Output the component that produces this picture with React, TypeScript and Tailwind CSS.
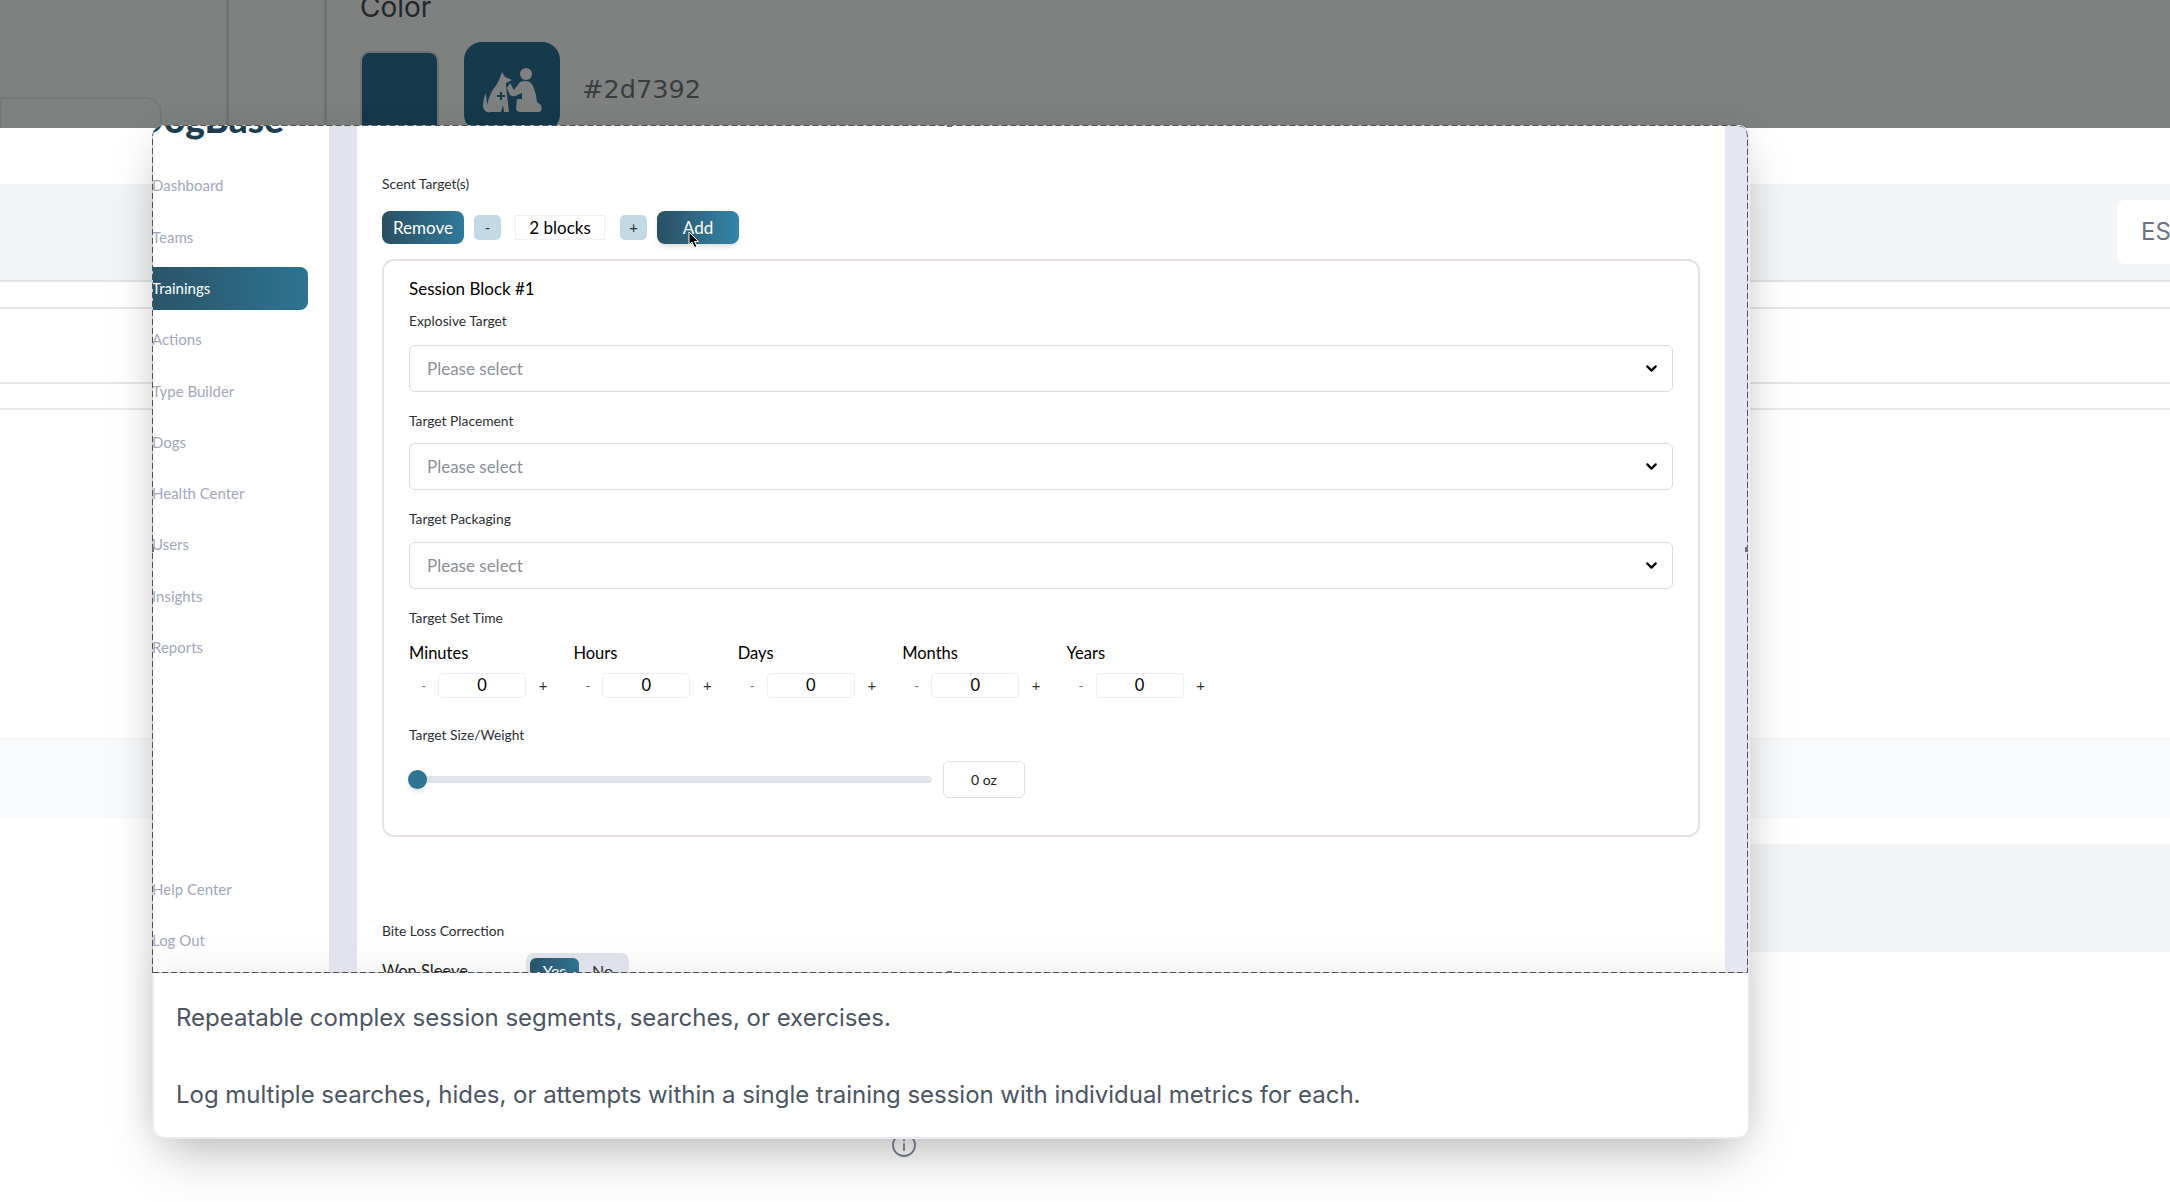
import { ChevronDown } from "lucide-react";

const navItems = ["Dashboard", "Teams", "Trainings", "Actions", "Type Builder", "Dogs", "Health Center", "Users", "Insights", "Reports"];
const timeUnits = ["Minutes", "Hours", "Days", "Months", "Years"];
const selects = [
  { label: "Explosive Target", labelClass: "mt-[12px]", boxClass: "mt-[15px]" },
  { label: "Target Placement", labelClass: "mt-[20px]", boxClass: "mt-[13px]" },
  { label: "Target Packaging", labelClass: "mt-[20px]", boxClass: "mt-[14px]" },
];

function VetIcon() {
  return (
    <svg viewBox="0 0 60 48" className="w-[60px] h-[48px]" fill="#7f8180">
      <circle cx="43" cy="7" r="6" />
      <path d="M27 16 L31 23 L37 15 Q42 13 47 15 Q52 19 54 35 L58 38 Q60 44 56 45 L38 45 Q33 45 33 41 L34 32 L39 32 L39 26 L32 29 Q28 30 26 26 L24 21 Z" />
      <path d="M19 5 L22 10 L29 13 L23 16 L24 28 L26 45 L21 45 L20 38 L18 45 L8 45 Q2 47 0 40 Q0 32 3 26 L4 38 Q6 30 9 24 Q14 18 16 13 Z" />
      <path d="M17 25 h2 v3 h3 v2 h-3 v3 h-2 v-3 h-3 v-2 h3 Z" fill="#163a4b" />
    </svg>
  );
}

function Backdrop() {
  return (
    <div className="flex flex-col">
      <div className="h-[128px] flex bg-[#7f8180] overflow-hidden">
        <div className="w-[229px] shrink-0 border-r-[3px] border-[#727473] pt-[97px]">
          <div className="w-[162px] h-[40px] rounded-tr-2xl border-2 border-[#767877]" />
        </div>
        <div className="w-[98px] shrink-0 border-r-[3px] border-[#727473]" />
        <div className="pl-[33px]">
          <div className="mt-[-11px] h-[36px] text-[28px] leading-[36px] text-[#24272a] font-['Inter',sans-serif]">Color</div>
          <div className="flex mt-[17px] items-start">
            <div className="mt-[9px] w-[79px] h-[90px] rounded-[10px] bg-[#163a4b] border-2 border-[#6f7170]" />
            <div className="ml-[25px] w-[96px] h-[90px] rounded-[18px] bg-[#163a4b] flex justify-center pt-[25px] pl-[2px]">
              <VetIcon />
            </div>
            <div className="ml-[22px] mt-[31px] text-[25.6px] leading-[32px] text-[#3a3d40] font-['DejaVu_Sans',sans-serif]">#2d7392</div>
          </div>
        </div>
      </div>
      <div className="h-[56px]" />
      <div className="h-[96px] bg-[#f3f4f6] flex justify-end items-start pt-[16px]">
        <div className="w-[53px] h-[64px] bg-white rounded-l-lg pl-[24px] flex items-center text-[24px] text-[#6b7280] font-['Inter',sans-serif] overflow-hidden">
          ES
        </div>
      </div>
      <div className="h-[2px] bg-[#e1e4e6]" />
      <div className="h-[25px]" />
      <div className="h-[2px] bg-[#e5e7eb]" />
      <div className="h-[73px]" />
      <div className="h-[2px] bg-[#e5e7eb]" />
      <div className="h-[24px]" />
      <div className="h-[2px] bg-[#e8ebeb]" />
      <div className="h-[328px]" />
      <div className="h-[1px] bg-[#f3f4f6]" />
      <div className="h-[80px] bg-[#f9fafb]" />
      <div className="h-[25px]" />
      <div className="h-[108px] flex justify-end">
        <div className="w-[570px] bg-[#f3f4f6]" />
      </div>
    </div>
  );
}

function Sidebar() {
  return (
    <div className="w-[177px] shrink-0 flex flex-col overflow-hidden font-['Lato',sans-serif]">
      <div className="h-[35px] shrink-0 ml-[-16px] mt-[-23px] mb-[23px] text-[37px] leading-[34px] font-black text-[#1e3d50] whitespace-nowrap">
        DogBase
      </div>
      {navItems.map((item) => (
        <div key={item} className="h-[51.3px] shrink-0 flex items-center">
          {item === "Trainings" ? (
            <div className="w-[156px] h-[43px] flex items-center rounded-r-lg bg-linear-to-r from-[#2a5468] to-[#2d7392] text-[15px] text-white">
              {item}
            </div>
          ) : (
            <span className="text-[15px] text-[#a3a7bd]">{item}</span>
          )}
        </div>
      ))}
      <div className="mt-auto pb-[7px]">
        {["Help Center", "Log Out"].map((item) => (
          <div key={item} className="h-[51.3px] flex items-center text-[15px] text-[#a3a7bd]">
            {item}
          </div>
        ))}
      </div>
    </div>
  );
}

function SelectField({ label, labelClass, boxClass }: { label: string; labelClass: string; boxClass: string }) {
  return (
    <>
      <div className={`h-[18px] text-[13.8px] leading-[18px] text-[#2b2f33] ${labelClass}`}>{label}</div>
      <div className={`h-[47px] flex items-center justify-between rounded-md border border-[#d9dbe0] pl-[17px] pr-[12px] ${boxClass}`}>
        <span className="text-[17px] text-[#8b9097]">Please select</span>
        <ChevronDown size={17} strokeWidth={3} className="text-black" />
      </div>
    </>
  );
}

function SessionBlock() {
  return (
    <div className="mt-[15px] h-[578px] rounded-xl border-2 border-[#e9e0e1] pt-[17px] px-[25px]">
      <div className="h-[22px] text-[17px] leading-[22px] text-black">Session Block #1</div>
      {selects.map((s) => (
        <SelectField key={s.label} {...s} />
      ))}
      <div className="mt-[20px] h-[18px] text-[13.8px] leading-[18px] text-[#2b2f33]">Target Set Time</div>
      <div className="mt-[15px] flex">
        {timeUnits.map((unit) => (
          <div key={unit} className="w-[164.4px]">
            <div className="h-[22px] text-[16.5px] leading-[22px] text-black">{unit}</div>
            <div className="mt-[9px] flex h-[25px] items-center">
              <span className="w-[29px] text-center text-[14px] text-[#777]">-</span>
              <div className="w-[88px] h-[25px] flex items-center justify-center border border-[#eceef2] rounded-sm text-[16.5px] text-black">0</div>
              <span className="w-[34px] text-center text-[15px] text-[#333]">+</span>
            </div>
          </div>
        ))}
      </div>
      <div className="mt-[28px] h-[18px] text-[13.8px] leading-[18px] text-[#2b2f33]">Target Size/Weight</div>
      <div className="mt-[17px] flex h-[37px] items-center">
        <div className="relative w-[523px] h-[7px] rounded-full bg-[#e2e4ec]">
          <div className="absolute left-[-1px] top-[-6px] w-[19px] h-[19px] rounded-full bg-[#2d7392] shadow-md" />
        </div>
        <div className="ml-[11px] w-[82px] h-[37px] flex items-center justify-center rounded-md border border-[#e0e0e2] text-[14px] text-[#222]">0 oz</div>
      </div>
    </div>
  );
}

function MainPanel() {
  return (
    <div className="flex-1 pt-[50px] pl-[25px] pr-[25px] overflow-hidden font-['Lato',sans-serif]">
      <div className="h-[18px] text-[13.8px] leading-[18px] text-[#2b2f33]">Scent Target(s)</div>
      <div className="mt-[18px] h-[33px] flex items-center">
        <div className="w-[82px] h-[33px] flex items-center justify-center rounded-lg bg-linear-to-r from-[#2a4f62] to-[#2f7a9b] text-[17px] text-white">Remove</div>
        <div className="ml-[10px] w-[27px] h-[25px] flex items-center justify-center rounded-[5px] bg-[#c3dae4] text-[15px] text-[#333]">-</div>
        <div className="ml-[14px] w-[90px] h-[25px] flex items-center justify-center border border-[#eff0f5] text-[17px] text-black">2 blocks</div>
        <div className="ml-[15px] w-[27px] h-[25px] flex items-center justify-center rounded-[5px] bg-[#c3dae4] text-[15px] text-[#333]">+</div>
        <div className="ml-[10px] w-[82px] h-[33px] flex items-center justify-center rounded-lg bg-linear-to-r from-[#2a4f62] to-[#3386ab] text-[17px] text-white shadow-md">Add</div>
      </div>
      <SessionBlock />
      <div className="mt-[85px] h-[18px] text-[13.8px] leading-[18px] text-[#2b2f33]">Bite Loss Correction</div>
      <div className="mt-[13px] flex items-start">
        <div className="w-[144px] pt-[7px] text-[16.5px] leading-[22px] text-[#222]">Won Sleeve</div>
        <div className="w-[103px] h-[40px] rounded-lg bg-[#dfe1ea] pt-[5px] pl-[4px] flex">
          <div className="w-[49px] h-[30px] rounded-md flex justify-center pt-[1px] bg-linear-to-r from-[#2a5468] to-[#2d7392] text-[16px] text-white">Yes</div>
          <div className="ml-[13px] pt-[1px] text-[16px] text-[#333]">No</div>
        </div>
      </div>
    </div>
  );
}

function Caption() {
  return (
    <div className="h-[164px] pl-[22px] pr-[24px] pt-[28px] border-l-2 border-[#ebebf1] rounded-bl-xl text-[24px] tracking-[-0.03px] leading-[34px] text-[#4b5563] font-['Inter',sans-serif] shadow-[0_-12px_30px_rgba(0,0,0,0.05)]">
      <p>Repeatable complex session segments, searches, or exercises.</p>
      <p className="mt-[43px]">Log multiple searches, hides, or attempts within a single training session with individual metrics for each.</p>
    </div>
  );
}

// dashed crop frame that sits on the screenshot, with its four small handles
function CropFrame() {
  return (
    <svg viewBox="0 0 1596 848" className="absolute inset-0 w-[1596px] h-[848px] pointer-events-none" fill="none">
      <path d="M0.5 848 V12 Q0.5 0.5 12 0.5 H1584 Q1595.5 0.5 1595.5 12 V847.5 H0.5" stroke="#c9cbd0" strokeWidth="1" />
      <path d="M0.5 848 V12 Q0.5 0.5 12 0.5 H1584 Q1595.5 0.5 1595.5 12 V847.5 H0.5" stroke="#4f5257" strokeWidth="1" strokeDasharray="6 3" />
      <path d="M795 0 h5 v2 h-5 Z M795 846 h5 v2 h-5 Z M1593 422 h3 v5 h-3 Z M0 422 h2 v5 h-2 Z" fill="#6b6e73" />
    </svg>
  );
}

function Cursor() {
  return (
    <svg viewBox="0 0 12 18" className="absolute left-[688px] top-[231px] w-[12px] h-[18px]">
      <path d="M1 1 L1 14 L4 11 L6.5 16.5 L9 15.5 L6.5 10.5 L10.5 10.5 Z" fill="#000" stroke="#fff" strokeWidth="1" />
    </svg>
  );
}

export default function App() {
  return (
    <div className="relative w-[2170px] h-[1202px] bg-white overflow-hidden">
      <Backdrop />
      <svg viewBox="0 0 24 24" className="absolute left-[892px] top-[1133px] w-[24px] h-[24px] text-[#7b8190]" fill="none" stroke="currentColor" strokeWidth="1.8" strokeLinecap="round">
        <circle cx="12" cy="12" r="11" />
        <path d="M12 11 V17 M12 7 V7.5" />
      </svg>
      <div className="absolute left-[152px] top-[125px] w-[1598px] rounded-xl bg-white border-r-2 border-b-2 border-[#ebebf1] shadow-[0_25px_50px_-12px_rgba(0,0,0,0.25),0_0_36px_rgba(0,0,0,0.05)]">
        <div className="relative h-[848px] flex overflow-hidden rounded-t-xl">
          <Sidebar />
          <div className="w-[28px] shrink-0 bg-[#e1e2ec]" />
          <MainPanel />
          <div className="w-[23px] shrink-0 bg-[#e5e6f0]" />
          <CropFrame />
        </div>
        <Caption />
      </div>
      <Cursor />
    </div>
  );
}
